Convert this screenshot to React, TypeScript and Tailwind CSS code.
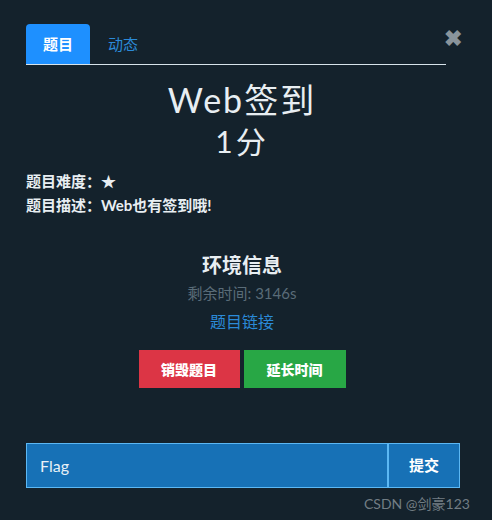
import React from "react";

export default function App() {
  return (
    <div
      className="w-[492px] h-[520px] bg-[#14222c] text-[#e8eef2] relative overflow-hidden"
      style={{ fontFamily: 'Lato, "Noto Sans CJK SC", sans-serif' }}
    >
      <div className="px-[26px] pt-[24px] pr-[46px]">
        {/* tabs */}
        <div className="flex items-end border-b border-[#d7e3ea] h-[41px]">
          <div className="w-[64px] h-[40px] bg-[#1e90ff] rounded-t-[4px] flex items-center justify-center text-[15px] font-bold text-white">
            题目
          </div>
          <div className="w-[66px] h-[40px] flex items-center justify-center text-[15px] text-[#2b8ad8]">
            动态
          </div>
        </div>

        <div className="pl-[12px]">
          <div className="text-center mt-[14px] text-[34px] leading-[42px] tracking-[2px]">Web签到</div>
          <div className="text-center text-[30px] leading-[38px] tracking-[3px] mt-[1px]">1分</div>
        </div>

        <div className="mt-[9px] text-[15px] font-bold leading-[24px]">
          <div>题目难度：★</div>
          <div>题目描述：Web也有签到哦!</div>
        </div>

        <div className="mt-[34px] flex flex-col items-center pl-[12px]">
          <div className="text-[20px] leading-[28px] font-semibold">环境信息</div>
          <div className="text-[15px] leading-[22px] text-[#5a6c78] mt-[3px]">剩余时间: 3146s</div>
          <div className="text-[16px] leading-[22px] text-[#2b8ad8] mt-[7px]">题目链接</div>
          <div className="flex gap-[4px] mt-[17px]">
            <div className="w-[101px] h-[38px] bg-[#dc3545] flex items-center justify-center text-[14px] font-black text-white">
              销毁题目
            </div>
            <div className="w-[102px] h-[38px] bg-[#28a745] flex items-center justify-center text-[14px] font-black text-white">
              延长时间
            </div>
          </div>
        </div>
      </div>

      {/* close */}
      <div className="absolute left-[444px] top-[28px] text-[#8a949b] text-[22px] leading-[20px] font-bold">
        ✖
      </div>

      {/* flag input */}
      <div className="absolute left-[26px] top-[443px] w-[434px] h-[45px] flex border border-[#5cb8f4] bg-[#1771b6]">
        <div className="flex-1 flex items-center pl-[13px] text-[16px] text-[#e8f0f6]">Flag</div>
        <div className="w-[72px] border-l-2 border-[#5cb8f4] flex items-center justify-center text-[15px] font-bold text-white">
          提交
        </div>
      </div>

      <div className="absolute left-[364px] top-[493px] text-[14px] text-[#8a949b] opacity-80">
        CSDN @剑豪123
      </div>
    </div>
  );
}
